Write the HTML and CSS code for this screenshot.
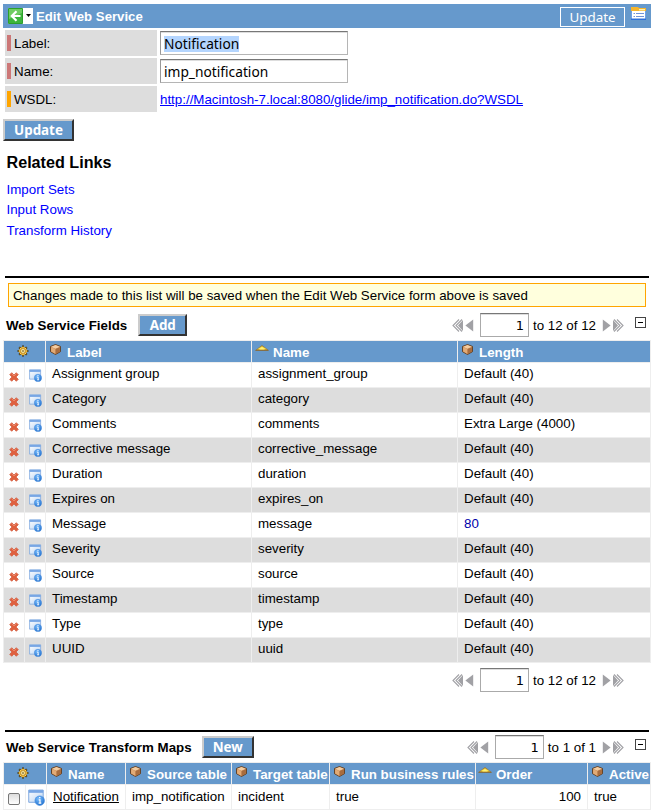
FILE: index.html
```html
<!DOCTYPE html>
<html lang="en">
<head>
<meta charset="utf-8">
<title>Edit Web Service</title>
<link rel="stylesheet" href="styles.css">
</head>
<body>
<svg class="sprites" width="0" height="0" aria-hidden="true">
  <defs>
    <linearGradient id="win" x1="0" y1="0" x2="1" y2="1"><stop offset="0" stop-color="#fff"/><stop offset="1" stop-color="#b9d3f2"/></linearGradient>
    <radialGradient id="ball" cx=".4" cy=".3" r=".8"><stop offset="0" stop-color="#7cc0ff"/><stop offset="1" stop-color="#1767c8"/></radialGradient>
    <linearGradient id="gold" x1="0" y1="0" x2="0" y2="1"><stop offset="0" stop-color="#c89a20"/><stop offset=".65" stop-color="#ffe64a"/><stop offset="1" stop-color="#8a5a10"/></linearGradient>
  </defs>
  <symbol id="cube" viewBox="0 0 10 10"><path d="M5 .5 9.5 2.2V7L5 9.5.5 7V2.2z" fill="#c98a55" stroke="#5a3413" stroke-width=".8"/><path d="M5 .9 9 2.5 5 4.4 1 2.5z" fill="#f3cda2"/><path d="M1 2.9 4.9 4.6V9L1 6.9z" fill="#e2ab76"/><path d="M5.1 4.6 9 2.9V6.9L5.1 9z" fill="#a86c3e"/></symbol>
  <symbol id="gear" viewBox="0 0 12 12"><path d="M6 .6V11.4M.6 6H11.4M2.2 2.2 9.8 9.8M9.8 2.2 2.2 9.8" stroke="#3c2a08" stroke-width="2"/><circle cx="6" cy="6" r="3.9" fill="#e8a92c"/><path d="M6 1.4V10.6M1.4 6H10.6M2.8 2.8 9.2 9.2M9.2 2.8 2.8 9.2" stroke="#ffd65a" stroke-width="1"/><circle cx="6" cy="6" r="2.4" fill="#fff0a0" stroke="#9b6510" stroke-width=".6"/><circle cx="6" cy="6" r=".8" fill="#4a2d08"/></symbol>
  <symbol id="sort" viewBox="0 0 14 6"><path d="M.5 5.4 7 .4 13.5 5.4z" fill="url(#gold)" stroke="#94651a" stroke-width=".5"/><path d="M4.2 4.6 7 1.8 9.8 4.6z" fill="#fff07a"/></symbol>
  <symbol id="del" viewBox="0 0 10 10"><path d="M2.7.7 5 3 7.3.7 9.3 2.7 7 5 9.3 7.3 7.3 9.3 5 7 2.7 9.3.7 7.3 3 5 .7 2.7z" fill="#e0613f" stroke="#d0573a" stroke-width=".7"/><path d="M2.7 1.7 5 4 7.3 1.7" fill="none" stroke="#f2a58c" stroke-width=".6"/></symbol>
  <symbol id="info" viewBox="0 0 16 16"><path d="M.7 1H14.3V12.5H.7z" fill="url(#win)" stroke="#7ba6de" stroke-width=".9"/><path d="M.7 1H14.3V3.6H.7z" fill="#78a6e4"/><circle cx="11" cy="11" r="4.5" fill="url(#ball)" stroke="#4a90e0" stroke-width=".6"/><path d="M10.1 10.2H11.3V13.2M10 13.3H12.5" fill="none" stroke="#fff" stroke-width="1.1"/><path d="M10.4 8.2H11.7" stroke="#fff" stroke-width="1.2"/></symbol>
  <symbol id="prev" viewBox="0 0 22 13"><path d="M21.2.5V12.5L13.4 6.5z" fill="#a1a1a5"/><path d="M11 1V12L6 6.5z" fill="#a1a1a5"/><path d="M7 .5 1 6.5 7 12.5M10 .5 4 6.5 10 12.5" fill="none" stroke="#a1a1a5" stroke-width="1.1"/></symbol>
  <symbol id="next" viewBox="0 0 22 13"><path d="M.8.5V12.5L8.6 6.5z" fill="#a1a1a5"/><path d="M11 1V12L16 6.5z" fill="#a1a1a5"/><path d="M15 .5 21 6.5 15 12.5M12 .5 18 6.5 12 12.5" fill="none" stroke="#a1a1a5" stroke-width="1.1"/></symbol>
</svg>

<main class="page">
  <header class="titlebar">
    <span class="back">
      <svg width="24" height="16" viewBox="0 0 24 16"><path d="M.5 .5H14.5V15.5H.5z" fill="#3db53d" stroke="#2c9f2c"/><path d="M1 1H14V5L1 11z" fill="#6fcc62"/><path d="M8.5 3.2 3.8 8 8.5 12.8M4.5 8H12.5" fill="none" stroke="#fff" stroke-width="2.2"/><path d="M18 6H23L20.5 9z" fill="#000"/></svg>
    </span>
    <h1>Edit Web Service</h1>
    <button class="ghost">Update</button>
    <svg class="form-icon" width="15" height="13" viewBox="0 0 15 13"><path d="M0 1H15V13H0z" fill="#fff"/><path d="M0 0H7L8 1H15V4H0z" fill="#f5b52c"/><path d="M8 2H14V3.4H8z" fill="#fff0b0"/><path d="M.5 4V12.3H14.5V4" fill="none" stroke="#6da0ea"/><path d="M0 12.3H15" stroke="#2f70d8" stroke-width="1.4"/><path d="M2.5 6.5H4M5 6.5H13M2.5 9.5H4M5 9.5H13" stroke="#7193d8"/></svg>
  </header>

  <section class="form">
    <div class="field"><label class="required">Label:</label><div class="input"><mark>Notification</mark></div></div>
    <div class="field"><label class="required">Name:</label><div class="input">imp_notification</div></div>
    <div class="field"><label class="optional">WSDL:</label><a class="wsdl" href="#">http://Macintosh-7.local:8080/glide/imp_notification.do?WSDL</a></div>
  </section>
  <button class="btn update">Update</button>

  <section class="related">
    <h2>Related Links</h2>
    <a href="#">Import Sets</a>
    <a href="#">Input Rows</a>
    <a href="#">Transform History</a>
  </section>

  <section class="list fields">
    <p class="notice">Changes made to this list will be saved when the Edit Web Service form above is saved</p>
    <div class="toolbar">
      <h3>Web Service Fields</h3><button class="btn add">Add</button>
      <div class="pager"><svg width="22" height="13"><use href="#prev"/></svg><span class="page-no">1</span><span class="range">to 12 of 12</span><svg width="22" height="13"><use href="#next"/></svg></div>
      <span class="collapse"></span>
    </div>
    <div class="grid">
      <div class="row head"><span class="tool"><svg width="12" height="12"><use href="#gear"/></svg></span><span><svg width="11" height="11"><use href="#cube"/></svg>Label</span><span class="sorted"><svg width="14" height="6"><use href="#sort"/></svg>Name</span><span><svg width="11" height="11"><use href="#cube"/></svg>Length</span></div>
      <div class="row"><i><svg width="10" height="10"><use href="#del"/></svg></i><i><svg width="13" height="13"><use href="#info"/></svg></i><span>Assignment group</span><span>assignment_group</span><span>Default (40)</span></div>
      <div class="row"><i><svg width="10" height="10"><use href="#del"/></svg></i><i><svg width="13" height="13"><use href="#info"/></svg></i><span>Category</span><span>category</span><span>Default (40)</span></div>
      <div class="row"><i><svg width="10" height="10"><use href="#del"/></svg></i><i><svg width="13" height="13"><use href="#info"/></svg></i><span>Comments</span><span>comments</span><span>Extra Large (4000)</span></div>
      <div class="row"><i><svg width="10" height="10"><use href="#del"/></svg></i><i><svg width="13" height="13"><use href="#info"/></svg></i><span>Corrective message</span><span>corrective_message</span><span>Default (40)</span></div>
      <div class="row"><i><svg width="10" height="10"><use href="#del"/></svg></i><i><svg width="13" height="13"><use href="#info"/></svg></i><span>Duration</span><span>duration</span><span>Default (40)</span></div>
      <div class="row"><i><svg width="10" height="10"><use href="#del"/></svg></i><i><svg width="13" height="13"><use href="#info"/></svg></i><span>Expires on</span><span>expires_on</span><span>Default (40)</span></div>
      <div class="row"><i><svg width="10" height="10"><use href="#del"/></svg></i><i><svg width="13" height="13"><use href="#info"/></svg></i><span>Message</span><span>message</span><span class="changed">80</span></div>
      <div class="row"><i><svg width="10" height="10"><use href="#del"/></svg></i><i><svg width="13" height="13"><use href="#info"/></svg></i><span>Severity</span><span>severity</span><span>Default (40)</span></div>
      <div class="row"><i><svg width="10" height="10"><use href="#del"/></svg></i><i><svg width="13" height="13"><use href="#info"/></svg></i><span>Source</span><span>source</span><span>Default (40)</span></div>
      <div class="row"><i><svg width="10" height="10"><use href="#del"/></svg></i><i><svg width="13" height="13"><use href="#info"/></svg></i><span>Timestamp</span><span>timestamp</span><span>Default (40)</span></div>
      <div class="row"><i><svg width="10" height="10"><use href="#del"/></svg></i><i><svg width="13" height="13"><use href="#info"/></svg></i><span>Type</span><span>type</span><span>Default (40)</span></div>
      <div class="row"><i><svg width="10" height="10"><use href="#del"/></svg></i><i><svg width="13" height="13"><use href="#info"/></svg></i><span>UUID</span><span>uuid</span><span>Default (40)</span></div>
    </div>
    <div class="toolbar footer">
      <div class="pager"><svg width="22" height="13"><use href="#prev"/></svg><span class="page-no">1</span><span class="range">to 12 of 12</span><svg width="22" height="13"><use href="#next"/></svg></div>
    </div>
  </section>

  <section class="list maps">
    <div class="toolbar">
      <h3>Web Service Transform Maps</h3><button class="btn new">New</button>
      <div class="pager"><svg width="22" height="13"><use href="#prev"/></svg><span class="page-no">1</span><span class="range">to 1 of 1</span><svg width="22" height="13"><use href="#next"/></svg></div>
      <span class="collapse"></span>
    </div>
    <div class="grid">
      <div class="row head"><span class="tool"><svg width="12" height="12"><use href="#gear"/></svg></span><span><svg width="11" height="11"><use href="#cube"/></svg>Name</span><span><svg width="11" height="11"><use href="#cube"/></svg>Source table</span><span><svg width="11" height="11"><use href="#cube"/></svg>Target table</span><span><svg width="11" height="11"><use href="#cube"/></svg>Run business rules</span><span class="sorted"><svg width="14" height="6"><use href="#sort"/></svg>Order</span><span><svg width="11" height="11"><use href="#cube"/></svg>Active</span></div>
      <div class="row"><i><b class="check"></b></i><i><svg width="17" height="17"><use href="#info"/></svg></i><span><a href="#">Notification</a></span><span>imp_notification</span><span>incident</span><span>true</span><span class="num">100</span><span>true</span></div>
    </div>
  </section>
</main>
</body>
</html>
```

FILE: styles.css
```css
* { box-sizing: border-box; }
body { margin: 0; background: #fff; color: #000; font: 13.33px/16px "Liberation Sans", Arial, sans-serif; overflow: hidden; }
.sprites { position: absolute; }
svg { display: block; flex: none; }
h1, h2, h3, p { margin: 0; font-size: 13.33px; }
.page { width: 648px; margin-left: 3px; padding-top: 4px; }

.titlebar { display: flex; align-items: center; height: 24px; padding: 0 5px 0 5px; background: #6699cc; color: #fff; }
.back { display: flex; background: #fff; width: 25px; height: 16px; margin-right: 3px; }
.titlebar h1 { flex: 1; padding-top: 2px; font-size: 13.2px; }
.ghost { width: 65px; height: 20px; margin: 2px 6px 0 0; padding: 0; border: 1px solid #fff; background: none; color: #fff; font: 13.4px/17px "Noto Sans", sans-serif; }
.form-icon { margin-top: -5px; }

.form { display: flex; flex-direction: column; gap: 2px; padding: 2px 0 0 2px; }
.field { display: flex; align-items: center; height: 26px; gap: 3px; }
.field label { width: 152px; height: 26px; padding: 6px 2px 4px; background: #ddd; line-height: 16px; display: flex; gap: 3px; }
.field label::before { content: ""; width: 4px; height: 16px; margin-top: -1px; background: #cc7777; }
.field .optional::before { background: #ffa500; }
.input { width: 188px; height: 24px; padding: 1px 3px 0; border: 1px solid #b5b5b5; border-top-color: #777; border-left-color: #999; box-shadow: inset 0 1px #ddd; font: 13.75px/21px "Noto Sans", sans-serif; }
mark { display: inline-block; height: 16px; line-height: 16px; color: inherit; background: #b4d5fe; }
.wsdl { padding-top: 2px; color: #0000ff; }

.btn { display: block; height: 22px; padding: 0; border: 2px solid; border-color: #ccc #333 #333 #ccc; background: #6699cc; color: #fff; font: bold 13.4px/17px "Noto Sans", sans-serif; }
.update { width: 71px; margin-top: 7px; }
.add { width: 49px; margin-left: 11px; }
.new { width: 52px; margin-left: 10px; }

.related { height: 135px; padding: 12px 0 0 3.5px; }
.related h2 { font-size: 16.15px; line-height: 18px; margin-bottom: 9px; }
.related a { display: block; height: 20.4px; line-height: 20px; color: #0000ff; text-decoration: none; }

.list::before { content: ""; display: block; height: 2px; width: 644px; margin-left: 2px; background: #000; }
.notice { width: 638px; height: 24px; margin: 5px 0 6px 5px; padding: 4px 4px 2px; border: 1px solid #ffa500; background: #ffffdd; font-size: 13.3px; }
.toolbar { display: flex; align-items: center; height: 24px; padding: 0 5px 0 3px; }
.toolbar h3 { padding-top: 2px; }
.fields .toolbar { margin-bottom: 3px; }
.pager { display: flex; align-items: center; margin-left: auto; }
.page-no { width: 49px; height: 24px; margin: 0 4px 0 6px; padding: 1px 4px 0 0; border: 1px solid #aaa; border-top-color: #777; box-shadow: inset 0 1px #ddd; text-align: right; font: 13px/21px "DejaVu Sans", sans-serif; }
.range { margin-right: 6px; padding-top: 2px; }
.collapse { display: flex; align-items: center; justify-content: center; width: 11px; height: 11px; margin: -5px 0 0 11px; border: 1px solid #444; }
.collapse::before { content: ""; width: 5px; height: 1px; background: #000; }

.grid { border: 1px solid #eee; border-width: 1px 1px 0 0; }
.row { display: grid; grid-template-columns: 21px 21px 206px 206px 1fr; height: 25px; border-bottom: 1px solid #eee; }
.row > * { border-left: 1px solid #eee; white-space: nowrap; overflow: hidden; }
.row > span { padding: 3px 6px; }
.row > i { display: flex; align-items: center; justify-content: center; padding-top: 3px; }
.row > i + i { padding-top: 1px; }
.row:nth-child(odd):not(.head) { background: #ddd; }
.row.head { height: 22px; background: #6699cc; color: #fff; font-weight: bold; }
.row.head > span { display: flex; padding: 4px 0 0 4px; gap: 6px; }
.row.head svg { margin-top: -1px; }
.row.head > .tool { grid-column: span 2; padding: 4px 0 0 13px; }
.row.head > .tool svg { margin-top: 0; }
.row.head > .sorted { gap: 4px; padding-left: 3px; }
.row.head > .sorted svg { margin-top: 0; }
.changed { color: #0000aa; }
.footer { height: 24px; margin-top: 5px; padding-right: 27px; }

.maps { margin-top: 38px; }
.maps .toolbar { margin: 3px 0; }
.maps .row { grid-template-columns: 22px 21px 79px 106px 98px 146px 112px 1fr; }
.maps .row:not(.head) > span { padding-top: 4px; }
.maps .row.head > .sorted { padding-left: 2px; }
.maps a { color: #000; }
.row > .num { text-align: right; }
.check { width: 12px; height: 12px; margin-right: 2px; border: 1px solid #777; border-radius: 2px; background: linear-gradient(#ddd, #fff); }
```
